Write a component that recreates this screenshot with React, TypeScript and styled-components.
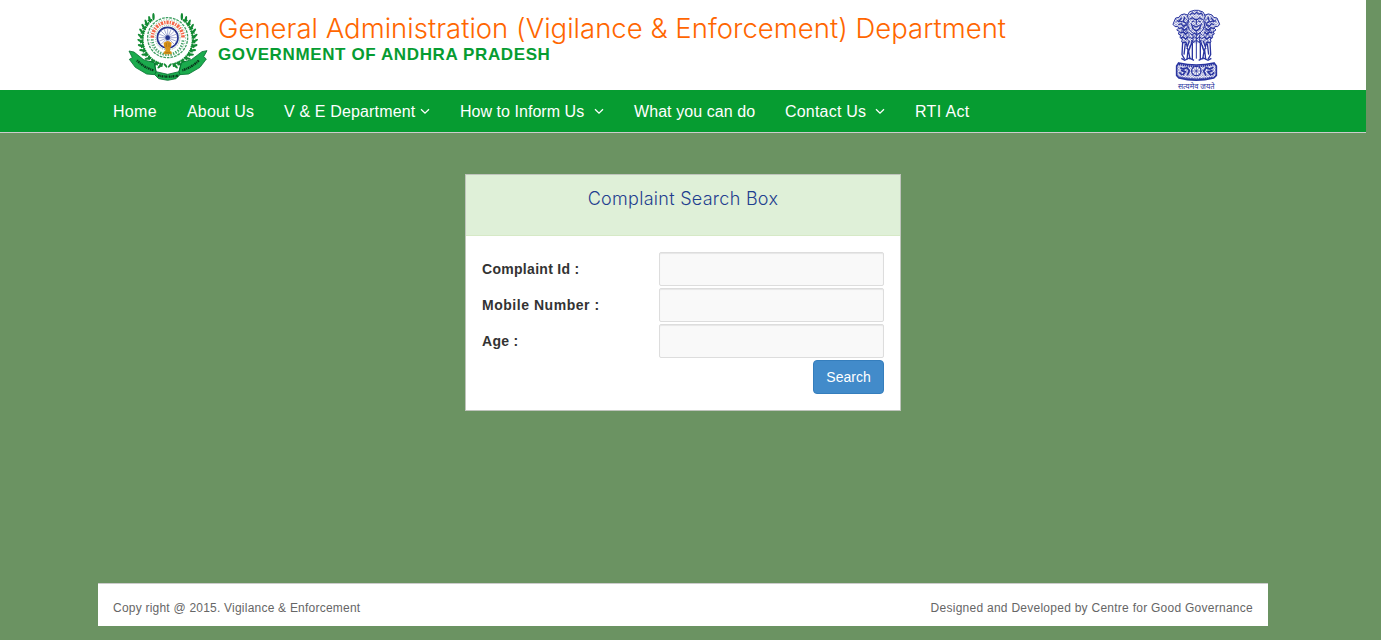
import React from 'react';
import styled, { createGlobalStyle } from 'styled-components';

const Global = createGlobalStyle`
  *, *::before, *::after { box-sizing: border-box; }
  html, body { margin: 0; padding: 0; background: #6b9362; }
  body { font-family: "Liberation Sans", Arial, sans-serif; font-size: 14px; color: #333; }
`;

const Page = styled.div`
  width: 1366px;
  height: 640px;
  display: flex;
  flex-direction: column;
  overflow: hidden;
`;

const Header = styled.header`
  height: 90px;
  flex: none;
  background: #fff;
  display: flex;
  align-items: flex-start;
  padding: 0 136px 0 120px;
`;

const StateLogo = styled.svg`
  width: 100px;
  height: 85px;
  margin-top: 5px;
  flex: none;
`;

const NationalLogo = styled.svg`
  width: 70px;
  height: 90px;
  margin-left: auto;
  flex: none;
  overflow: visible;
`;

const Titles = styled.div`
  margin-left: -2px;
  white-space: nowrap;
`;

const Title = styled.h1`
  margin: 10px 0 0;
  font: 300 27.5px/36px Inter, "Liberation Sans", sans-serif;
  letter-spacing: 0.01px;
  color: #ff6600;
`;

const Subtitle = styled.h2`
  margin: 0;
  font: 700 17px/18px "Liberation Sans", Arial, sans-serif;
  letter-spacing: 0.62px;
  color: #069c31;
`;

const Nav = styled.nav`
  height: 43px;
  flex: none;
  display: flex;
  padding-left: 98px;
  background: #069c31;
  border-bottom: 1px solid #ccc;
`;

const NavItem = styled.a<{ $w: number }>`
  width: ${p => p.$w}px;
  padding: 1px 15px 0;
  display: flex;
  align-items: center;
  justify-content: space-between;
  white-space: nowrap;
  font-size: 16px;
  line-height: 42px;
  color: #fff;
`;

const Caret = styled.svg`
  width: 10px;
  height: 7px;
  flex: none;
`;

const Main = styled.main`
  flex: 1;
  display: flex;
  justify-content: center;
  align-items: flex-start;
  padding-top: 41px;
`;

const Panel = styled.section`
  width: 436px;
  height: 237px;
  background: #fff;
  border: 1px solid #bfc4bc;
`;

const PanelHead = styled.div`
  height: 61px;
  background: #dff0d8;
  border-bottom: 1px solid #d6e9c6;
  text-align: center;
`;

const PanelTitle = styled.h3`
  margin: 0;
  padding-top: 12px;
  font: 300 18px/24px Inter, "Liberation Sans", sans-serif;
  letter-spacing: 0.28px;
  color: #1f3f8f;
`;

const Form = styled.div`
  padding: 16px 16px 0;
  display: flex;
  flex-direction: column;
  gap: 2px;
`;

const Row = styled.label`
  display: flex;
  justify-content: space-between;
  align-items: center;
  height: 34px;
`;

const Label = styled.span<{ $ls: number }>`
  font-weight: 700;
  font-size: 14px;
  letter-spacing: ${p => p.$ls}px;
`;

const Input = styled.input`
  width: 225px;
  height: 34px;
  border: 1px solid #ddd;
  border-radius: 2px;
  background: #f9f9f9;
  box-shadow: inset 0 1px 1px rgba(0, 0, 0, 0.075);
  outline: none;
`;

const Button = styled.button`
  align-self: flex-end;
  width: 71px;
  height: 34px;
  padding: 0;
  border: 1px solid #357ebd;
  border-radius: 4px;
  background: #428bca;
  color: #fff;
  font: 14px/20px "Liberation Sans", Arial, sans-serif;
`;

const Footer = styled.footer`
  flex: none;
  height: 43px;
  margin: 0 98px 14px;
  padding: 6px 15px 0;
  display: flex;
  justify-content: space-between;
  align-items: center;
  background: #fff;
  border-top: 1px solid #ccc;
  font-size: 12px;
  color: #666;
`;

const FootText = styled.span<{ $ls: number }>`
  letter-spacing: ${p => p.$ls}px;
`;

const NavText = styled.span<{ $ls: number }>`
  letter-spacing: ${p => p.$ls}px;
`;

const pt = (cx: number, cy: number, r: number, deg: number) => {
  const a = (deg * Math.PI) / 180;
  return [cx + r * Math.cos(a), cy + r * Math.sin(a)];
};

const Leaves = () => {
  const items: React.ReactNode[] = [];
  for (let i = 0; i < 14; i++) {
    const deg = 100 + i * 10.2;
    const [x, y] = pt(143, 104, 78, deg);
    items.push(
      <g key={i} transform={`translate(${x} ${y}) rotate(${deg})`}>
        <ellipse cx="7" cy="5" rx="11" ry="3.6" transform="rotate(36)" />
        <ellipse cx="-5" cy="5" rx="8" ry="3" transform="rotate(130)" />
      </g>
    );
  }
  return (
    <g fill="#128a33">
      {items}
      <path d="M128 180A78 78 0 0 1 96 42" fill="none" stroke="#128a33" strokeWidth="3" />
    </g>
  );
};

const AndhraEmblem = () => (
  <StateLogo viewBox="0 0 300 255">
    <Leaves />
    <g transform="translate(286 0) scale(-1 1)"><Leaves /></g>
    <circle cx="143" cy="98" r="60" fill="#fff" stroke="#3f9f62" strokeWidth="4" strokeDasharray="8 3" />
    <path d="M97 98A46 46 0 0 1 189 98" fill="none" stroke="#f26a4b" strokeWidth="11" strokeDasharray="7 3 4 3" />
    <path d="M97 103A46 46 0 0 0 189 103" fill="none" stroke="#4aa56c" strokeWidth="8" strokeDasharray="4 4" />
    <circle cx="143" cy="98" r="54" fill="none" stroke="#72b88a" strokeWidth="3" strokeDasharray="3 5" />
    <circle cx="143" cy="98" r="37" fill="#fff" stroke="#83bd96" strokeWidth="3" strokeDasharray="3 3" />
    <circle cx="143" cy="98" r="31" fill="#fff" stroke="#24348f" strokeWidth="5" />
    <g stroke="#7c86c0" strokeWidth="2">
      {Array.from({ length: 16 }, (_, i) => {
        const [x, y] = pt(143, 98, 28, i * 22.5);
        return <path key={i} d={`M143 98L${x} ${y}`} />;
      })}
    </g>
    <circle cx="143" cy="98" r="7" fill="#24348f" />
    <path d="M137 110q6-4 12 0l6 3-2 12-3 5v8l5 2v8h-24v-8l5-2v-8l-4-5-1-12z" fill="#d89318" />
    <path d="M139 114v12m8-12v12m-11 17h15" stroke="#9c6c1c" strokeWidth="2" />
    <g transform="translate(0 3)">
      <path
        d="M27 135L42 138L72 162L103 170L108 197L143 205L177 197L184 170L214 161L246 137L261 134L251 152L259 159L240 184L206 204L180 206L168 218L143 223L116 218L104 206L80 204L46 184L28 160L37 155Z"
        fill="#1bab4d" stroke="#087332" strokeWidth="2.5"
      />
      <path d="M103 170L108 197L104 206M184 170L177 197L180 206" fill="none" stroke="#087332" strokeWidth="3" />
      <g fill="none" stroke="#08351b" strokeWidth="7">
        <path d="M51 163Q72 185 101 193" strokeDasharray="3 2 5 2" />
        <path d="M114 208Q144 216 176 208" strokeDasharray="5 2 2 2" />
        <path d="M187 193Q216 184 237 163" strokeDasharray="3 2 5 2" />
      </g>
    </g>
  </StateLogo>
);

const BLUE = '#2a35a0';

const LionHalf = () => (
  <g fill="none" stroke={BLUE} strokeWidth="3">
    <path d="M85 44Q72 36 62 43l-5 7-10 2-4 9-4 10 6 7 8-1 3 5-6 6 9 5-4 7 7 3-2 8 7 4-2 9 8 3" />
    <path d="M50 60l9 3m6-12l-7 9 10 4m6-15l-4 14 9 5M55 72l9-3 6 8 10-5m-24 12l10-3 6 8 9-6m-20 14l9-3 7 7 8-8m-22 18l8-2 6 7 8-8m-18 18l9-2 5 5" strokeWidth="4" />
    <path d="M73 51l11 10-6 12 9 10-8 8 9 12-9 9 9 11M63 80l20 32M84 63L61 97m22-18L65 115" strokeWidth="2" />
    <path d="M68 124l-2 38 8 14m2-48l-4 34m7-34l5 20-3 28m10-42l-5 18 4 24m7-50v50M88 121l-8 23m17-25l-9 28" strokeWidth="4" />
    <path d="M64 173l10 6 14-7 14 7" strokeWidth="4" />
  </g>
);

const NationalEmblem = () => (
  <NationalLogo viewBox="0 0 210 270">
    <defs>
      <pattern id="mane" width="8" height="8" patternUnits="userSpaceOnUse">
        <path d="M0 0L8 8M8 0L0 8" stroke={BLUE} strokeWidth="2" opacity="0.6" />
      </pattern>
    </defs>
    <g transform="translate(0 2)">
      <path
        d="M85 44Q72 36 62 43L57 50L47 52L39 71L45 78L56 82L53 95L58 105L65 118L69 128H149L153 118L160 105L165 95L162 82L173 78L179 71L171 52L161 50L156 43Q146 36 133 44L122 31H96Z"
        fill="url(#mane)"
      />
      <LionHalf />
      <g transform="translate(218 0) scale(-1 1)"><LionHalf /></g>
      <g fill="none" stroke={BLUE} strokeWidth="3">
        <path d="M86 57l-4-12 7-12 14-4h12l14 5 7 12-5 13 3 14-5 14-9 10-11 4-12-5-9-9-5-14z" />
        <path d="M89 43l8-7 6 5 7-6 7 6 6-4 6 8M89 56l8-5 7 5 9 0 6-5 9 6M96 63l7-2m11 0l8 2m-13-6v15m-10 2l9 5 11-5m-26-6l8 18 8 6 8-6 8-18M96 82l13 8 13-8" strokeWidth="3.5" />
        <path d="M88 96l8 7 8-6 7 7 8-7 8 7M86 108l10 6 7-6 8 7 8-7 7 6 9-6M93 119l8 6 8-6 9 6 7-6M109 94v80M99 102v25m20-25v25" strokeWidth="3" />
        <path d="M56 187q53 12 106 0l7 9v28l-8 8q-53 13-104 0l-7-8v-28z" strokeWidth="5" fill="url(#mane)" />
        <path d="M57 191q52 12 104 0M58 229q52 12 102 0" strokeWidth="5" strokeDasharray="4 2" />
        <circle cx="109" cy="211" r="14" strokeWidth="4" fill="#fff" />
        <path d="M109 197v28M95 211h28M99 201l20 20m0-20l-20 20" strokeWidth="2" />
        <path d="M61 201l9 4 11-4 7 9-6 14m-19-15l13 4-8 11m-10-9l8 8m94-23l-10 5-12-4-7 10 7 14m20-15l-14 4 9 10m10-9l-8 8" strokeWidth="5" />
      </g>
    </g>
    <text x="109" y="268" textAnchor="middle" textLength="110" lengthAdjust="spacingAndGlyphs" fontSize="24" fill={BLUE} fontFamily="'Noto Sans Devanagari', 'Noto Sans', sans-serif">सत्यमेव जयते</text>
  </NationalLogo>
);

const NAV = [
  { text: 'Home', w: 74, ls: 0.3 },
  { text: 'About Us', w: 97, ls: 0.16 },
  { text: 'V & E Department', w: 176, ls: 0.15, caret: true },
  { text: 'How to Inform Us', w: 174, ls: 0.04, caret: true },
  { text: 'What you can do', w: 151, ls: 0.07 },
  { text: 'Contact Us', w: 130, ls: 0.2, caret: true },
  { text: 'RTI Act', w: 85, ls: 0.35 },
];

const FIELDS = [
  { text: 'Complaint Id :', ls: 0.3 },
  { text: 'Mobile Number :', ls: 0.53 },
  { text: 'Age :', ls: 0.3 },
];

export default function App() {
  return (
    <>
      <Global />
      <Page>
        <Header>
          <AndhraEmblem />
          <Titles>
            <Title>General Administration (Vigilance &amp; Enforcement) Department</Title>
            <Subtitle>GOVERNMENT OF ANDHRA PRADESH</Subtitle>
          </Titles>
          <NationalEmblem />
        </Header>
        <Nav>
          {NAV.map(n => (
            <NavItem key={n.text} $w={n.w}>
              <NavText $ls={n.ls}>{n.text}</NavText>
              {n.caret && (
                <Caret viewBox="0 0 10 7">
                  <path d="M1 1.2L5 5.2L9 1.2" fill="none" stroke="#fff" strokeWidth="1.3" />
                </Caret>
              )}
            </NavItem>
          ))}
        </Nav>
        <Main>
          <Panel>
            <PanelHead>
              <PanelTitle>Complaint Search Box</PanelTitle>
            </PanelHead>
            <Form>
              {FIELDS.map(f => (
                <Row key={f.text}>
                  <Label $ls={f.ls}>{f.text}</Label>
                  <Input />
                </Row>
              ))}
              <Button>Search</Button>
            </Form>
          </Panel>
        </Main>
        <Footer>
          <FootText $ls={0.22}>Copy right @ 2015. Vigilance &amp; Enforcement</FootText>
          <FootText $ls={0.26}>Designed and Developed by Centre for Good Governance</FootText>
        </Footer>
      </Page>
    </>
  );
}
